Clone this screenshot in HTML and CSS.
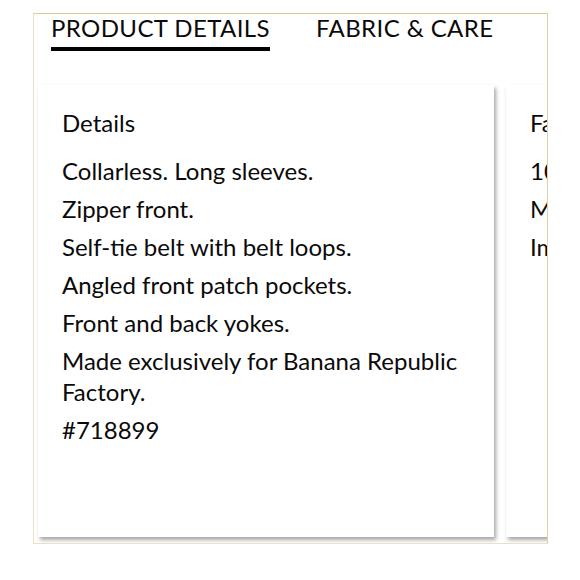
FILE: index.html
```html
<!DOCTYPE html>
<html>
<head>
<meta charset="utf-8">
<link rel="stylesheet" href="styles.css">
</head>
<body>
<div class="frame">
  <div class="tabs">
    <div class="tab active">PRODUCT DETAILS</div>
    <div class="tab">FABRIC &amp; CARE</div>
  </div>
  <div class="cards">
    <div class="card">
      <h2 class="card-title">Details</h2>
      <ul class="list">
        <li>Collarless. Long sleeves.</li>
        <li>Zipper front.</li>
        <li>Self-tie belt with belt loops.</li>
        <li>Angled front patch pockets.</li>
        <li>Front and back yokes.</li>
        <li>Made exclusively for Banana Republic Factory.</li>
        <li>#718899</li>
      </ul>
    </div>
    <div class="card">
      <h2 class="card-title">Fabric &amp; Care</h2>
      <ul class="list">
        <li>100% cotton.</li>
        <li>Machine wash.</li>
        <li>Imported.</li>
      </ul>
    </div>
  </div>
</div>
</body>
</html>
```
FILE: styles.css
```css
html, body { margin: 0; padding: 0; background: #fff; }
body { font-family: Lato, "Noto Sans", sans-serif; color: #0a0a0a; }
.frame {
  margin: 13px 0 0 33px;
  width: 513px;
  height: 529px;
  border: 1px solid #ece2c2;
  border-top-color: #dccb92;
  border-right-color: #e2d3a2;
  overflow: hidden;
  box-sizing: content-box;
}
.tabs { display: flex; gap: 46px; padding: 0 0 0 17px; height: 71px; }
.tab {
  font-size: 24px;
  letter-spacing: 0.4px;
  line-height: 28px;
  height: 33px;
  border-bottom: 4px solid transparent;
}
.tab.active { border-bottom-color: #000; }
.cards { display: flex; gap: 12px; padding-left: 4px; }
.card {
  flex: 0 0 456px;
  height: 452px;
  background: #fff;
  box-shadow: 2px 3px 4px rgba(0,0,0,0.35);
  box-sizing: border-box;
  padding: 23px 24px 0 24px;
}
.card-title { font-size: 24px; font-weight: 400; margin: 0 0 17px; line-height: 30px; }
.list { list-style: none; margin: 0; padding: 0; font-size: 24px; line-height: 31px; }
.list li { margin-bottom: 7px; }
```
